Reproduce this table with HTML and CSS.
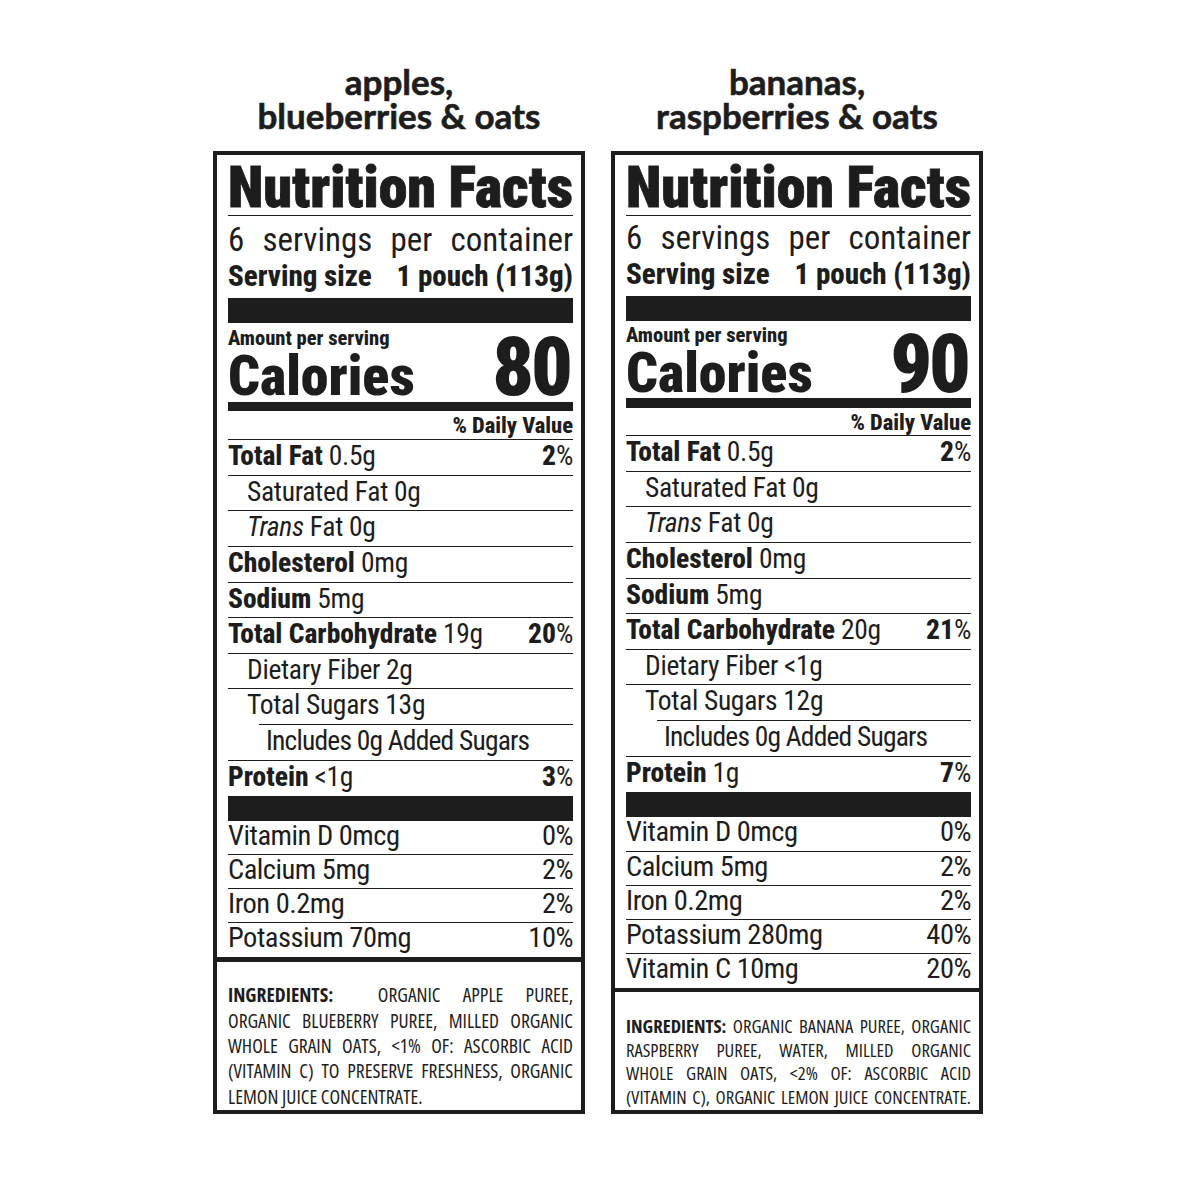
FILE: index.html
```html
<!DOCTYPE html>
<html lang="en">
<head>
<meta charset="utf-8">
<title>Nutrition Facts</title>
<link rel="stylesheet" href="styles.css">
</head>
<body>
<main class="page">
  <section class="product">
    <h2 class="product-name">apples,<br>blueberries &amp; oats</h2>
    <div class="label label--a">
      <div class="facts">
        <div class="nf-title"><span>Nutrition</span><span>Facts</span></div>
        <div class="serving">
          <div class="serving-count"><span>6</span><span>servings</span><span>per</span><span>container</span></div>
          <div class="serving-size"><span>Serving size</span><span>1 pouch (113g)</span></div>
        </div>
        <div class="calories">
          <div class="amount">Amount per serving</div>
          <div class="cal-row"><span class="cal-label">Calories</span><span class="cal-value">80</span></div>
        </div>
        <div class="dv-head">% Daily Value</div>
        <div class="nutrients">
          <div class="row"><span><b>Total Fat</b> 0.5g</span><span><b>2</b>%</span></div>
          <div class="row row--sub"><span>Saturated Fat 0g</span></div>
          <div class="row row--sub"><span><i>Trans</i> Fat 0g</span></div>
          <div class="row"><span><b>Cholesterol</b> 0mg</span></div>
          <div class="row"><span><b>Sodium</b> 5mg</span></div>
          <div class="row"><span><b>Total Carbohydrate</b> 19g</span><span><b>20</b>%</span></div>
          <div class="row row--sub"><span>Dietary Fiber 2g</span></div>
          <div class="row row--sub row--sugars"><span>Total Sugars 13g</span></div>
          <div class="row row--subsub"><span>Includes 0g Added Sugars</span></div>
          <div class="row row--last"><span><b>Protein</b> &lt;1g</span><span><b>3</b>%</span></div>
        </div>
        <div class="vitamins">
          <div class="vrow"><span>Vitamin D 0mcg</span><span>0%</span></div>
          <div class="vrow"><span>Calcium 5mg</span><span>2%</span></div>
          <div class="vrow"><span>Iron 0.2mg</span><span>2%</span></div>
          <div class="vrow"><span>Potassium 70mg</span><span>10%</span></div>
        </div>
      </div>
      <div class="ingredients">
        <span class="ing-line"><b>INGREDIENTS:</b>&nbsp; ORGANIC APPLE PUREE,</span>
        <span class="ing-line">ORGANIC BLUEBERRY PUREE, MILLED ORGANIC</span>
        <span class="ing-line">WHOLE GRAIN OATS, &lt;1% OF: ASCORBIC ACID</span>
        <span class="ing-line">(VITAMIN C) TO PRESERVE FRESHNESS, ORGANIC</span>
        <span class="ing-line ing-line--end">LEMON JUICE CONCENTRATE.</span>
      </div>
    </div>
  </section>

  <section class="product">
    <h2 class="product-name">bananas,<br>raspberries &amp; oats</h2>
    <div class="label label--b">
      <div class="facts">
        <div class="nf-title"><span>Nutrition</span><span>Facts</span></div>
        <div class="serving">
          <div class="serving-count"><span>6</span><span>servings</span><span>per</span><span>container</span></div>
          <div class="serving-size"><span>Serving size</span><span>1 pouch (113g)</span></div>
        </div>
        <div class="calories">
          <div class="amount">Amount per serving</div>
          <div class="cal-row"><span class="cal-label">Calories</span><span class="cal-value">90</span></div>
        </div>
        <div class="dv-head">% Daily Value</div>
        <div class="nutrients">
          <div class="row"><span><b>Total Fat</b> 0.5g</span><span><b>2</b>%</span></div>
          <div class="row row--sub"><span>Saturated Fat 0g</span></div>
          <div class="row row--sub"><span><i>Trans</i> Fat 0g</span></div>
          <div class="row"><span><b>Cholesterol</b> 0mg</span></div>
          <div class="row"><span><b>Sodium</b> 5mg</span></div>
          <div class="row"><span><b>Total Carbohydrate</b> 20g</span><span><b>21</b>%</span></div>
          <div class="row row--sub"><span>Dietary Fiber &lt;1g</span></div>
          <div class="row row--sub row--sugars"><span>Total Sugars 12g</span></div>
          <div class="row row--subsub"><span>Includes 0g Added Sugars</span></div>
          <div class="row row--last"><span><b>Protein</b> 1g</span><span><b>7</b>%</span></div>
        </div>
        <div class="vitamins">
          <div class="vrow"><span>Vitamin D 0mcg</span><span>0%</span></div>
          <div class="vrow"><span>Calcium 5mg</span><span>2%</span></div>
          <div class="vrow"><span>Iron 0.2mg</span><span>2%</span></div>
          <div class="vrow"><span>Potassium 280mg</span><span>40%</span></div>
          <div class="vrow"><span>Vitamin C 10mg</span><span>20%</span></div>
        </div>
      </div>
      <div class="ingredients">
        <span class="ing-line"><b>INGREDIENTS:</b> ORGANIC BANANA PUREE, ORGANIC</span>
        <span class="ing-line">RASPBERRY PUREE, WATER, MILLED ORGANIC</span>
        <span class="ing-line">WHOLE GRAIN OATS, &lt;2% OF: ASCORBIC ACID</span>
        <span class="ing-line">(VITAMIN C), ORGANIC LEMON JUICE CONCENTRATE.</span>
      </div>
    </div>
  </section>
</main>
</body>
</html>
```

FILE: styles.css
```css
* { box-sizing: border-box; }

body {
  margin: 0;
  background: #fff;
  color: #1d1d1d;
}

.page {
  display: flex;
  gap: 26px;
  padding: 64px 0 0 213px;
}

.product {
  width: 372px;
  display: flex;
  flex-direction: column;
}

.product-name {
  margin: 0 0 19px;
  font: 700 35px/34px "Lato", "Open Sans", sans-serif;
  text-align: center;
  -webkit-text-stroke: 0.6px #1d1d1d;
}

.label {
  height: 963px;
  display: flex;
  flex-direction: column;
  border: 4px solid #1d1d1d;
  font-family: "Roboto", "Open Sans", sans-serif;
  font-stretch: 75%;
}

.label--a {
  --serv-pad: 6px;
  --serv-h: 82px;
  --amount-pad: 4px;
  --cal-h: 79px;
  --cal-bar: 9px;
  --dv-h: 29px;
  --vrow-h: 34px;
  --sep: 5px;
  --ing-size: 19.5px;
  --ing-lh: 25.3px;
  --ing-pad: 20px;
}

.label--b {
  --serv-pad: 4px;
  --serv-h: 80px;
  --amount-pad: 3px;
  --cal-h: 77px;
  --cal-bar: 10px;
  --dv-h: 28px;
  --vrow-h: 34.2px;
  --sep: 4px;
  --ing-size: 18.6px;
  --ing-lh: 23.8px;
  --ing-pad: 21.5px;
}

.facts {
  padding: 0 8px 0 11px;
  border-bottom: var(--sep) solid #1d1d1d;
}

.nf-title {
  display: flex;
  justify-content: space-between;
  height: 61px;
  padding-top: 5px;
  border-bottom: 1px solid #1d1d1d;
  font-size: 58px;
  line-height: 55px;
  font-weight: 900;
  white-space: nowrap;
  -webkit-text-stroke: 0.8px #1d1d1d;
}

.serving {
  height: calc(var(--serv-h) + 25px);
  padding-top: var(--serv-pad);
  border-bottom: 25px solid #1d1d1d;
}

.serving-count {
  display: flex;
  justify-content: space-between;
  font-size: 33px;
  line-height: 36px;
}

.serving-size {
  display: flex;
  justify-content: space-between;
  font-size: 29px;
  line-height: 36px;
  font-weight: 800;
}

.calories {
  height: calc(var(--cal-h) + var(--cal-bar));
  padding-top: var(--amount-pad);
  border-bottom: var(--cal-bar) solid #1d1d1d;
}

.amount {
  font-size: 20.5px;
  line-height: 22px;
  font-weight: 800;
}

.cal-row {
  display: flex;
  justify-content: space-between;
  align-items: baseline;
  font-weight: 900;
}

.cal-label {
  font-size: 56px;
  line-height: 36px;
}

.cal-value {
  padding-right: 3px;
  font-size: 82px;
  line-height: 36px;
  letter-spacing: -3px;
}

.dv-head {
  height: var(--dv-h);
  border-bottom: 1px solid #1d1d1d;
  font-size: 22.5px;
  line-height: 28px;
  font-weight: 800;
  text-align: right;
}

.nutrients {
  border-bottom: 25px solid #1d1d1d;
}

.row {
  display: flex;
  justify-content: space-between;
  height: 35.65px;
  border-bottom: 1px solid #1d1d1d;
  font-size: 27.5px;
  line-height: 32px;
  letter-spacing: -0.3px;
  white-space: nowrap;
}

.row b {
  font-weight: 800;
  letter-spacing: 0;
}

.row--sub { padding-left: 19px; }

.row--subsub {
  padding-left: 38px;
  letter-spacing: -0.8px;
}

.row--sugars {
  border-bottom: 0;
  background: linear-gradient(#1d1d1d, #1d1d1d) right bottom / calc(100% - 31px) 1px no-repeat;
}

.row--last { border-bottom: 0; }

.vrow {
  display: flex;
  justify-content: space-between;
  height: var(--vrow-h);
  border-bottom: 1px solid #1d1d1d;
  font-size: 28.5px;
  line-height: 30px;
  letter-spacing: -0.5px;
  white-space: nowrap;
}

.vrow:last-child { border-bottom: 0; }

.ingredients {
  flex: 1;
  padding: var(--ing-pad) 8px 0 11px;
  font-family: "Open Sans", "Roboto", sans-serif;
  font-stretch: 75%;
  font-size: var(--ing-size);
  line-height: var(--ing-lh);
}

.ing-line {
  display: block;
  text-align: justify;
  text-align-last: justify;
}

.ing-line--end { text-align-last: left; }
```
